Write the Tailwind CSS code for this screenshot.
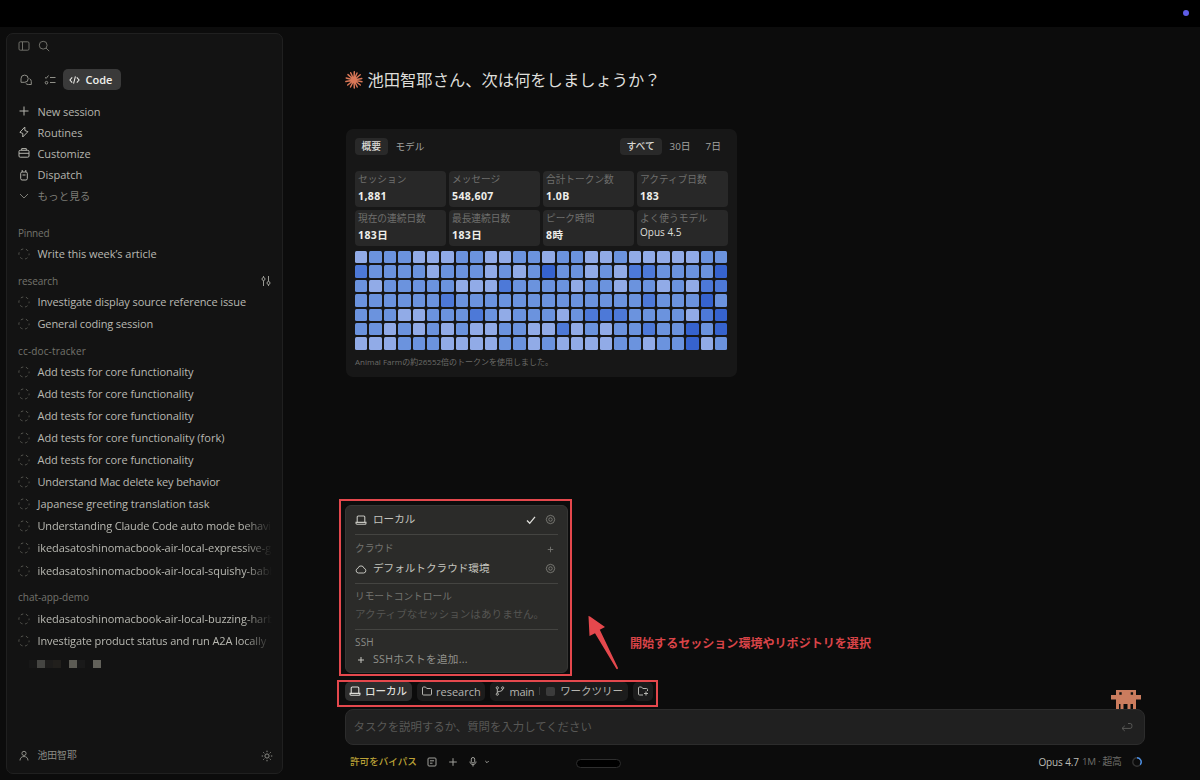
<!DOCTYPE html>
<html lang="ja">
<head>
<meta charset="utf-8">
<title>Code</title>
<script src="https://cdn.jsdelivr.net/npm/@tailwindcss/browser@4"></script>
</head>
<body class="relative flex h-[780px] w-[1200px] flex-col overflow-hidden bg-[#0c0c0c] font-['Open_Sans','Noto_Sans_CJK_JP',sans-serif] text-[11px] leading-none whitespace-nowrap text-[#b9b9b2]">
<svg class="hidden">
  <symbol id="dash" viewBox="0 0 12 12"><circle cx="6" cy="6" r="5.1" fill="none" stroke="#55554f" stroke-width="1" stroke-dasharray="2.6 2.74" stroke-dashoffset="1.3"/></symbol>
  <symbol id="laptop" viewBox="0 0 12 12"><path d="M2.2 8V3a1 1 0 0 1 1-1h5.6a1 1 0 0 1 1 1v5M1 8.4h10v.8a1 1 0 0 1-1 1H2a1 1 0 0 1-1-1z" fill="none" stroke="currentColor" stroke-width="1.1"/></symbol>
  <symbol id="gear" viewBox="0 0 12 12"><path d="M6 1.4l1.6.6 1.7.6.7 1.7.6 1.7-.6 1.7-.7 1.7-1.7.6-1.6.6-1.6-.6-1.7-.6L2 7.7 1.4 6 2 4.3l.7-1.7L4.4 2z" fill="none" stroke="currentColor" stroke-width=".9"/><circle cx="6" cy="6" r="1.9" fill="none" stroke="currentColor" stroke-width=".9"/></symbol>
</svg>
<header class="flex h-[27px] shrink-0 items-center justify-end bg-black pr-[11px]"><span class="mb-px size-1.5 rounded-full bg-[#5e5ce6]"></span></header>
<div class="flex min-h-0 grow">
  <aside class="mt-[6px] ml-1.5 flex h-[740.5px] w-[277px] shrink-0 flex-col rounded-[7px] border border-[#202020] bg-[#131313] pr-3 pl-[11px]">
    <div class="mt-[5px] flex h-3.5 items-center gap-2 text-[#6f6f69]">
      <svg class="size-3" viewBox="0 0 12 12" fill="none" stroke="currentColor"><rect x="1" y="1.8" width="10" height="8.4" rx="1.3"/><path d="M4.5 2v8"/></svg>
      <svg class="size-3" viewBox="0 0 12 12" fill="none" stroke="currentColor"><circle cx="5.2" cy="5.2" r="3.9"/><path d="M8 8l3.2 3.2"/></svg>
    </div>
    <div class="mt-[15.5px] flex h-[22px] items-center">
      <svg class="ml-[1.5px] size-3 text-[#8f8f88]" viewBox="0 0 12 12" fill="none" stroke="currentColor"><path d="M1 8.3V4.8A3.6 3.6 0 1 1 4.7 8.3zM9.5 4.7a3 3 0 0 1 1.8 2.8v3H8.3a3 3 0 0 1-2.6-1.3"/></svg>
      <svg class="ml-3 size-3 text-[#8f8f88]" viewBox="0 0 12 12" fill="none" stroke="currentColor"><path d="M1 3.3l1.2 1.1L4.5 1.5M6 3.5h5.5M6 8.5h5.5"/><circle cx="2.5" cy="8.7" r="1.3"/></svg>
      <div class="ml-[7.5px] flex h-[21.5px] w-[58px] items-center rounded-[5px] bg-[#3a3a3a] pl-[6px] font-semibold text-[#f0f0ec]">
        <svg class="mr-[5.5px] h-2.5 w-[11px]" viewBox="0 0 12 10" fill="none" stroke="currentColor" stroke-width="1.1"><path d="M3.5 2.2L1 5l2.5 2.8M8.5 2.2L11 5 8.5 7.8M7 1L5 9"/></svg><span>Code</span>
      </div>
    </div>
    <nav class="mt-[10px] font-[450] text-[#b5b5ae]">
      <div class="flex h-[21.2px] items-center gap-[7.5px]"><svg class="size-3" viewBox="0 0 12 12" fill="none" stroke="currentColor"><path d="M6 1.5v9M1.5 6h9"/></svg><span class="tracking-[-.08px]">New session</span></div>
      <div class="flex h-[21.2px] items-center gap-[7.5px]"><svg class="size-3" viewBox="0 0 12 12" fill="none" stroke="currentColor" stroke-linejoin="round"><path d="M6.8 1L1.9 6.3l3 1.2L4.7 11l5.2-5.3-3-1.2z"/></svg><span>Routines</span></div>
      <div class="flex h-[21.2px] items-center gap-[7.5px]"><svg class="size-3" viewBox="0 0 12 12" fill="none" stroke="currentColor"><rect x="1" y="3.3" width="10" height="6.9" rx="1.2"/><path d="M3.7 3V1.6h4.6V3M1 6.3h10"/></svg><span class="tracking-[-.08px]">Customize</span></div>
      <div class="flex h-[21.2px] items-center gap-[7.5px]"><svg class="size-3" viewBox="0 0 12 12" fill="none" stroke="currentColor"><rect x="2.7" y="3" width="6.6" height="8" rx="1.4"/><path d="M4.2 3V1M7.8 3V1M4.5 6h3"/></svg><span>Dispatch</span></div>
      <div class="flex h-[21.2px] items-center gap-[7.5px] text-[10.6px] font-normal text-[#7c7c76]"><svg class="size-3" viewBox="0 0 12 12" fill="none" stroke="currentColor"><path d="M2 4l4 4 4-4"/></svg><span>もっと見る</span></div>
    </nav>
    <div id="sessions" class="-mr-[2px] mt-4"></div>
    <div class="mt-2 ml-[10.5px] flex h-[8.5px]">
      <i class="w-2 bg-[#171717]"></i><i class="w-2 bg-[#454542]"></i><i class="w-2 bg-[#1d1c1b]"></i><i class="w-2 bg-[#211f1c]"></i><i class="w-2"></i><i class="w-2 bg-[#5c5b54]"></i><i class="w-2 bg-[#191919]"></i><i class="w-2"></i><i class="w-2 bg-[#62615a]"></i>
    </div>
    <div class="mt-auto mb-2.5 flex h-3.5 items-center text-[9.8px] text-[#8c8c86]">
      <svg class="mr-[7.5px] size-3" viewBox="0 0 12 12" fill="none" stroke="currentColor"><circle cx="6" cy="3.4" r="2.1"/><path d="M2 10.5c0-2.3 1.5-4 4-4s4 1.700 4 4"/></svg><span>池田智耶</span>
      <svg class="-mr-[3px] ml-auto size-3" viewBox="0 0 12 12" fill="none" stroke="currentColor"><circle cx="6" cy="6" r="2.1"/><path d="M6 .7v1.4M6 9.9v1.4M.7 6h1.4M9.9 6h1.4M2.3 2.3l1 1M8.7 8.7l1 1M2.3 9.7l1-1M8.7 3.3l1-1"/></svg>
    </div>
  </aside>
  <main class="flex w-[917px] flex-col pl-[62px]">
    <h1 class="mt-[43px] flex h-5 items-center gap-[4.5px] text-[16.3px] text-[#dededa]">
      <svg class="size-[18px]" viewBox="0 0 18 18" stroke="#d97757" stroke-width="1.5" stroke-linecap="round"><path d="M9 9L9.3.8M9 9l3-7M9 9l6.2-5.2M9 9l7.8-1.5M9 9l8 1.7M9 9l6.3 5M9 9l3.2 7M9 9l.3 8M9 9l-3.5 7M9 9l-6.3 5M9 9L.9 10.5M9 9L1.2 7M9 9L3 3.6M9 9L5.7 1.8"/></svg>
      <span>池田智耶さん、次は何をしましょうか？</span>
    </h1>
    <section class="mt-[39px] ml-[.5px] h-[248px] w-[391.5px] rounded-[7px] bg-[#171717] px-[9.5px] pt-[9px]">
      <div class="flex h-[17px] items-center text-[9.8px] text-[#a3a3a0]">
        <span class="flex h-[17px] w-[32.5px] items-center justify-center rounded bg-[#292929] font-medium text-[#dadad6]">概要</span>
        <span class="ml-2 text-[9.6px]">モデル</span>
        <span class="ml-auto flex h-[17px] w-[42px] items-center justify-center rounded bg-[#292929] font-medium text-[#dadad6]">すべて</span>
        <span class="ml-2">30日</span>
        <span class="mr-[6.5px] ml-[15px]">7日</span>
      </div>
      <div id="stats" class="mt-4 grid grid-cols-4 gap-x-[3.5px] gap-y-[3px]"></div>
      <div id="heat" class="mt-[5px] grid grid-cols-26 gap-[2px]"></div>
      <p class="mt-[7.5px] text-[8px] leading-[10px] text-[#6b6b68]">Animal Farmの約26552倍のトークンを使用しました。</p>
    </section>
    <div class="mt-auto flex h-[19px] gap-[5px] text-[11px] text-[#b5b5b0] *:pb-px">
      <div class="flex w-[67px] items-center rounded-[5px] bg-[#2e2e2e] pl-1 text-[10.5px] font-medium text-[#deded9]"><svg class="mr-1 size-3"><use href="#laptop"/></svg><span>ローカル</span></div>
      <div class="flex w-[68px] items-center rounded-[5px] bg-[#1c1c1c] pl-1 font-medium"><svg class="mr-[3px] size-3" viewBox="0 0 12 12" fill="none" stroke="currentColor"><path d="M1.5 3a1 1 0 0 1 1-1h2l1.3 1.5h3.7a1 1 0 0 1 1 1v4.5a1 1 0 0 1-1 1h-7a1 1 0 0 1-1-1z"/></svg><span>research</span></div>
      <div class="flex w-[138px] items-center rounded-[5px] bg-[#1c1c1c] pl-1 font-medium"><svg class="mr-[3.500px] size-3" viewBox="0 0 12 12" fill="none" stroke="currentColor"><circle cx="3.3" cy="2.8" r="1.1"/><circle cx="3.3" cy="9.2" r="1.1"/><circle cx="8.7" cy="2.9" r="1.1"/><path d="M3.3 4v4M8.7 4c0 2.5-3 2-5.2 3"/></svg><span class="tracking-[-.3px]">main</span><i class="ml-[5px] h-2 w-px bg-[#3a3a3a]"></i><i class="mr-[5px] ml-[6px] size-[9px] rounded-[2px] bg-[#3b3b3b]"></i><span class="text-[10.5px] font-normal">ワークツリー</span></div>
      <div class="flex w-[20px] items-center justify-center rounded-[5px] bg-[#1c1c1c]"><svg class="size-3" viewBox="0 0 12 12" fill="none" stroke="currentColor"><path d="M10.5 6V4.5a1 1 0 0 0-1-1H5.8L4.5 2h-2a1 1 0 0 0-1 1v6a1 1 0 0 0 1 1H6M9 6.5v4M7 8.5h4"/></svg></div>
    </div>
    <div class="mt-2 flex h-[36px] w-[799.5px] shrink-0 items-center rounded-lg border border-[#2c2c2c] bg-[#202020] pr-[11px] pl-[7.5px] text-[11.4px] text-[#585856]">タスクを説明するか、質問を入力してください
      <svg class="ml-auto size-3" viewBox="0 0 12 12" fill="none" stroke="currentColor"><path d="M3.8 4.8L1 7.4 3.8 10M1 7.4h8.2a1.7 1.7 0 0 0 1.7-1.7V4.2a1.7 1.7 0 0 0-1.7-1.7H7"/></svg></div>
    <div class="mt-[8.5px] mb-[10.5px] flex h-4 w-[799.5px] shrink-0 items-center pl-[5px] text-[#a0a09b]">
      <span class="text-[9.6px] font-medium text-[#bba136]">許可をバイパス</span>
      <svg class="ml-[9.5px] size-3" viewBox="0 0 12 12" fill="none" stroke="currentColor"><rect x="2" y="2" width="8" height="8" rx="1"/><path d="M4 4.8h4M4 7.2h2.5"/></svg>
      <svg class="ml-[8.5px] size-3" viewBox="0 0 12 12" fill="none" stroke="currentColor"><path d="M6 2.2v7.6M2.2 6h7.6"/></svg>
      <svg class="ml-[8px] size-3" viewBox="0 0 12 12" fill="none" stroke="currentColor"><rect x="4.3" y="1.5" width="3.4" height="5.5" rx="1.7"/><path d="M3 5.5c0 4 6 4 6 0M6 8.5v2"/></svg>
      <svg class="ml-[2px] size-3" viewBox="0 0 12 12" fill="none" stroke="currentColor"><path d="M4.3 5L6 6.7 7.7 5"/></svg>
      <span class="mt-1 ml-[83.5px] h-[9px] w-[45px] rounded-full border border-[#2e2e2e] bg-black"></span>
      <span class="ml-auto text-[10px] font-medium tracking-[-.12px] text-[#bdbdb8]">Opus 4.7</span><span class="ml-[3px] text-[9.8px] tracking-[-.3px] text-[#6d6d69]">1M · 超高</span>
      <svg class="mr-[3px] ml-[10px] size-[10px]" viewBox="0 0 10 10" fill="none" stroke-width="1.4"><circle cx="5" cy="5" r="4.2" stroke="#333"/><path d="M5 .8A4.2 4.2 0 0 1 8.2 7.7" stroke="#4a90e8"/></svg>
    </div>
  </main>
</div>

<div class="absolute top-[505px] left-[345px] flex h-[168px] w-[223px] flex-col rounded-[6px] border border-[#363634] bg-[#2b2b29] pr-[9px] pl-[9px] text-[10.6px] text-[#c4c4be]">
  <div class="mt-[6.5px] flex h-3.5 items-center"><svg class="mr-[6px] size-3"><use href="#laptop"/></svg><span>ローカル</span><svg class="ml-auto size-3" viewBox="0 0 12 12" fill="none" stroke="#dededa" stroke-width="1.3"><path d="M2 6.5l2.7 2.8L10 2.8"/></svg><svg class="mr-[2px] ml-2 size-[11px] text-[#858580]"><use href="#gear"/></svg></div>
  <hr class="mt-[7.5px] border-[#444441]">
  <div class="mt-[7px] flex h-3.5 items-center text-[9.7px] text-[#747470]"><span>クラウド</span><svg class="mr-[2px] ml-auto size-[11px]" viewBox="0 0 12 12" stroke="currentColor"><path d="M6 3v6M3 6h6"/></svg></div>
  <div class="mt-[5.5px] flex h-3.5 items-center"><svg class="mr-[6px] size-3" viewBox="0 0 12 12" fill="none" stroke="currentColor"><path d="M3.3 10a2.4 2.4 0 0 1-.4-4.7 3.2 3.2 0 0 1 6.2 0A2.4 2.4 0 0 1 8.7 10z"/></svg><span>デフォルトクラウド環境</span><svg class="mr-[2px] ml-auto size-[11px] text-[#858580]"><use href="#gear"/></svg></div>
  <hr class="mt-[7.5px] border-[#444441]">
  <div class="mt-[5.5px] flex h-3.5 items-center text-[9.7px] text-[#747470]"><span>リモートコントロール</span></div>
  <div class="mt-[3.5px] flex h-3.5 items-center text-[#555552]"><span>アクティブなセッションはありません。</span></div>
  <hr class="mt-[8px] border-[#444441]">
  <div class="mt-[5px] flex h-3.5 items-center text-[10px] tracking-[.2px] text-[#8a8a85]"><span>SSH</span></div>
  <div class="mt-[3.5px] flex h-3.5 items-center text-[#91918c]"><svg class="mr-[6px] size-3 text-[#c4c4be]" viewBox="0 0 12 12" stroke="currentColor"><path d="M6 3v6M3 6h6"/></svg><span class="tracking-[.3px]">SSHホストを追加...</span></div>
</div>
<div class="absolute top-[499px] left-[338.5px] h-[177px] w-[233px] border-2 border-[#e5484d]"></div>
<div class="absolute top-[680px] left-[337px] h-[26.5px] w-[320.5px] border-2 border-[#e5484d]"></div>
<svg class="absolute top-[612px] left-[584px] h-[60px] w-[40px]" viewBox="584 612 40 60" fill="#e5484d"><path d="M588.5 616.5Q588 615.5 590 616.5L605 627L599.8 629.8L618 668Q618 669.5 616.5 669L595 633.2L589.5 636Z"/></svg>
<p class="absolute top-[636px] left-[630px] text-[12.05px] leading-4 font-bold text-[#d94448]">開始するセッション環境やリポジトリを選択</p>
<svg class="absolute top-[689px] left-[1111px] h-[20px] w-[30px]" viewBox="0 0 30 20" fill="#cb7c5e"><path d="M5 1h20v5h5v4.5h-5v9.5h-3v-5h-2.5v5h-3v-5h-4v5h-3v-5H8v5H5v-9.5H0V6h5z"/><path fill="#111" d="M8.3 3.3h2.4v2.4H8.3zM19.7 3.3h2.4v2.4h-2.400z"/></svg>

<script>
const groups = [
  ['Pinned', 'tracking-[-.2px]', [['Write this week’s article', 'tracking-[-.04px]']]],
  ['research', 'tracking-[-.08px]', [['Investigate display source reference issue', 'tracking-[-.11px]'], ['General coding session', 'tracking-[-.13px]']]],
  ['cc-doc-tracker', 'tracking-[.15px]', [
    ['Add tests for core functionality', 'tracking-[-.04px]'],
    ['Add tests for core functionality', 'tracking-[-.04px]'],
    ['Add tests for core functionality', 'tracking-[-.04px]'],
    ['Add tests for core functionality (fork)', 'tracking-[-.01px]'],
    ['Add tests for core functionality', 'tracking-[-.04px]'],
    ['Understand Mac delete key behavior', 'tracking-[-.17px]'],
    ['Japanese greeting translation task', 'tracking-[-.05px]'],
    ['Understanding Claude Code auto mode behavior', 'tracking-[-.15px]', true],
    ['ikedasatoshinomacbook-air-local-expressive-garden', 'tracking-[-.06px]', true],
    ['ikedasatoshinomacbook-air-local-squishy-babbling', 'tracking-[-.06px]', true]]],
  ['chat-app-demo', 'tracking-[-.02px]', [
    ['ikedasatoshinomacbook-air-local-buzzing-harbor', 'tracking-[-.06px]', true],
    ['Investigate product status and run A2A locally', 'tracking-[-.12px]', true]]],
];
const sliders = '<svg class="size-3" viewBox="0 0 12 12" fill="none" stroke="#9a9a94"><path d="M3.5 1v1.5M3.5 5.5V11M8.5 1v5.5M8.5 9.5V11"/><circle cx="3.5" cy="4" r="1.5"/><circle cx="8.5" cy="8" r="1.5"/></svg>';
document.getElementById('sessions').innerHTML = groups.map(([name, track, items], i) =>
  `<div class="${i ? 'mt-[5.5px] ' : ''}flex h-[20.5px] items-center justify-between text-[10px] text-[#73736d]"><span class="${track}">${name}</span>${i === 1 ? sliders : ''}</div>` +
  items.map(([text, tr, fade]) => `<div class="flex h-[22.05px] items-center gap-[7.5px] font-[450] text-[#b9b9b2]"><svg class="size-3 shrink-0"><use href="#dash"/></svg><span class="${tr} leading-4 ${fade ? 'grow overflow-hidden mask-r-from-[88%] mask-r-to-[100%]' : ''}">${text}</span></div>`).join('')).join('');

const stats = [['セッション', '1,881'], ['メッセージ', '548,607'], ['合計トークン数', '1.0B'], ['アクティブ日数', '183'], ['現在の連続日数', '183日'], ['最長連続日数', '183日'], ['ピーク時間', '8時'], ['よく使うモデル', 'Opus 4.5']];
document.getElementById('stats').innerHTML = stats.map(([label, value], i) =>
  `<div class="h-[36px] rounded-[4px] bg-[#282828] pt-[3px] pl-[3px]"><div class="flex h-3 items-center text-[9.7px] text-[#6f6f6d]">${label}</div><div class="${i === 7 ? 'mt-px flex h-3 items-center text-[10px] font-medium text-[#deded9]' : 'mt-[4px] flex h-3 items-center text-[10.5px] font-bold tracking-[.38px] text-[#eeeeea]'}">${value}</div></div>`).join('');

const shades = { 1: 'bg-[#91abe7]', 2: 'bg-[#6b93de]', 3: 'bg-[#4d79d8]', 4: 'bg-[#3663ce]' };
const rows = ['12221112211221221121111122', '32222122212124221213322224', '21222221113222212212212133', '22222232222222222222322242', '22211222321222123332222134', '22121212112211312122322424', '11122211112212111122122412'];
document.getElementById('heat').innerHTML = [...rows.join('')].map(c => `<i class="h-[12.4px] rounded-[1.5px] ${shades[c]}"></i>`).join('');
</script>
</body>
</html>
